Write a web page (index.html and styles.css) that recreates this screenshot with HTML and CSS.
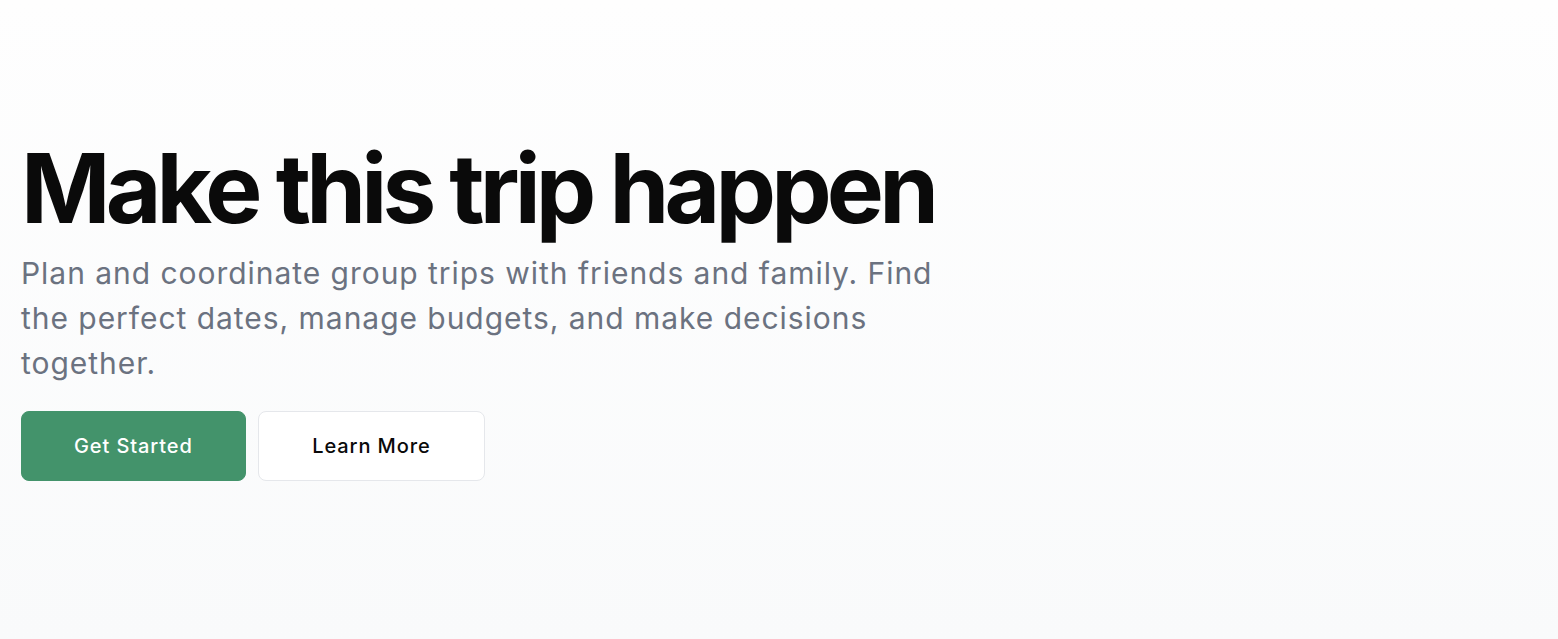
FILE: index.html
```html
<!DOCTYPE html>
<html lang="en">
<head>
    <meta charset="UTF-8">
    <meta name="viewport" content="width=device-width, initial-scale=1.0">
    <title>Make this trip happen</title>
    <link rel="stylesheet" href="styles.css">
</head>
<body>
    <main class="hero">
        <div class="hero-content">
            <h1>Make this trip happen</h1>
            <p class="lead">Plan and coordinate group trips with friends and family. Find the perfect dates, manage budgets, and make decisions together.</p>
            <div class="actions">
                <button class="btn btn-primary">Get Started</button>
                <button class="btn btn-secondary">Learn More</button>
            </div>
        </div>
    </main>
</body>
</html>
```

FILE: styles.css
```css
body {
    font-family: Inter, "Noto Sans", sans-serif;
    margin: 0;
    min-height: 100vh;
    background: linear-gradient(to bottom, #fefefe, #f9fafb);
}
.hero {
    display: flex;
    align-items: center;
    min-height: 100vh;
    padding: 0 21px 18px;
    box-sizing: border-box;
}
.hero-content {
    max-width: 950px;
}
h1 {
    font-size: 96px;
    font-weight: 700;
    letter-spacing: -0.05em;
    line-height: 1;
    color: #0a0a0a;
    margin: 0 0 15px;
}
.lead {
    max-width: 935px;
    font-size: 30px;
    line-height: 1.5;
    letter-spacing: 0.032em;
    color: #6b7280;
    margin: 0 0 25px;
}
.actions {
    display: flex;
    gap: 12px;
}
.btn {
    font-family: inherit;
    font-size: 20px;
    font-weight: 500;
    letter-spacing: 0.045em;
    line-height: 28px;
    padding: 20px 52px;
    border-radius: 8px;
    cursor: pointer;
}
.btn-primary {
    background-color: #43936b;
    color: white;
    border: 1px solid #43936b;
}
.btn-secondary {
    padding: 20px 53.5px;
    background-color: white;
    color: #0a0a0a;
    border: 1px solid #e5e7eb;
}
```
